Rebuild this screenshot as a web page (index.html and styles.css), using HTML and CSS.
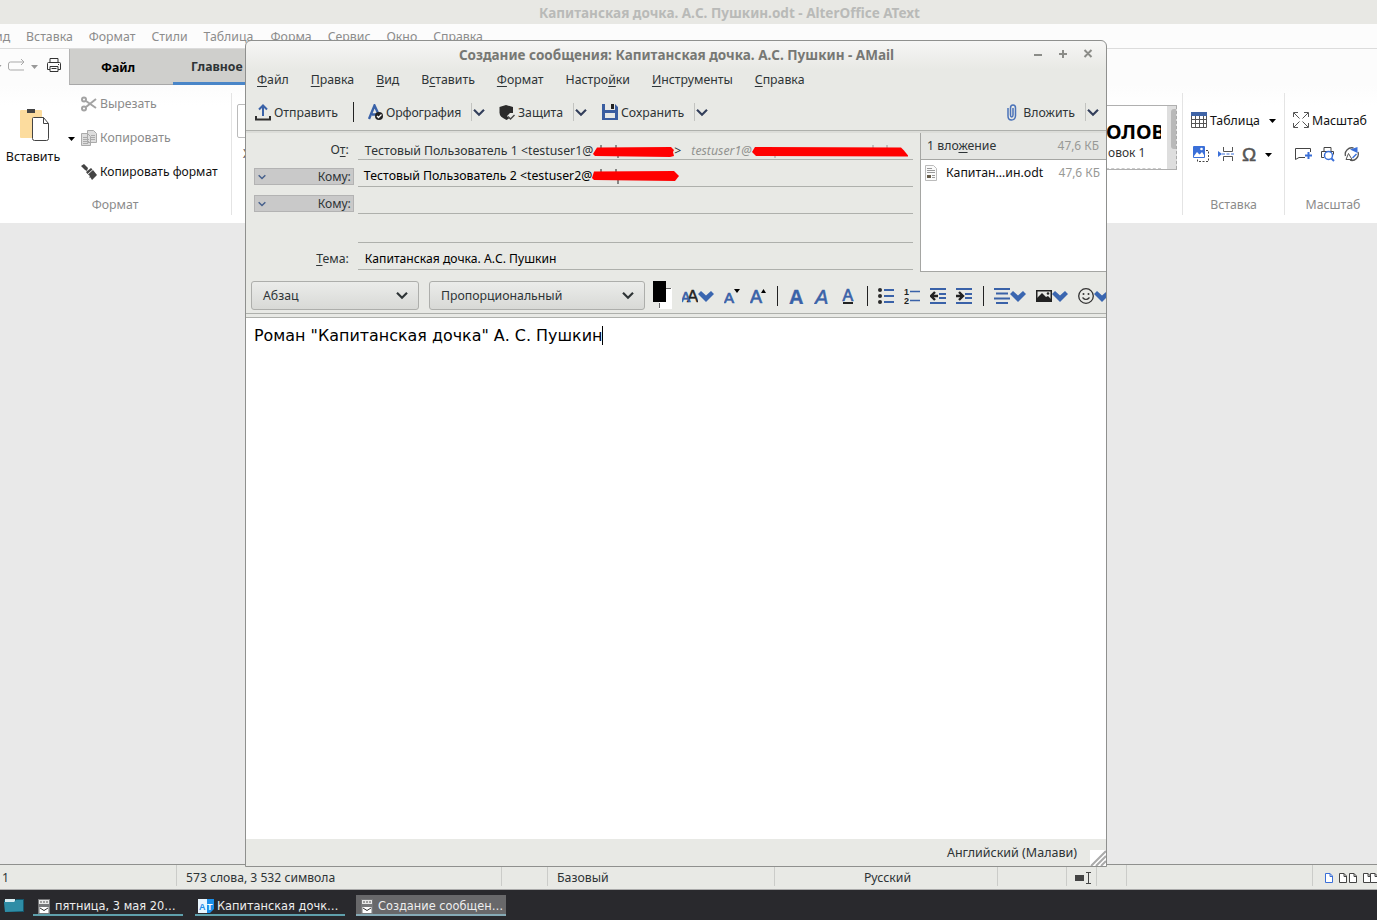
FILE: index.html
```
<!DOCTYPE html>
<html lang="ru">

<head>
  <meta charset="UTF-8">
  <meta name="viewport" content="width=device-width, initial-scale=1.0">
  <title>Создание сообщения</title>
  <link rel="stylesheet" href="styles.css">
</head>

<body>
  <svg class="defs">
    <symbol id="chev" viewBox="0 0 12 9"><path d="M1 1.8 L6 6.8 L11 1.8" fill="none" stroke="currentColor" stroke-width="2.2"/></symbol>
    <symbol id="bigchev" viewBox="0 0 16 16"><path d="M0 6 L3 3 L8 7.500 L13 3 L16 6 L8 14z" fill="#3a66b0"/></symbol>
    <symbol id="mail" viewBox="0 0 12 15"><path d="M0 0h12v15H0z" fill="#77787a"/><path d="M1 1h10v4H1z" fill="#e8e8e8"/><path d="M2 3h8" stroke="#555" stroke-dasharray="2 1"/><path d="M1.500 8h9v6h-9z" fill="#fff"/><path d="M2 9l4 2.500L10 9" fill="none" stroke="#333"/></symbol>
    <symbol id="page" viewBox="0 0 8 10"><path d="M.5.5h4.500l2.500 2.500v6.500h-7zM5 .5v3h2.500" fill="#fff" stroke="currentColor"/></symbol>
  </svg>

  <!-- text editor in the background -->
  <div class="editor">
    <div class="editor__title">Капитанская дочка. А.С. Пушкин.odt - AlterOffice AText</div>
    <div class="editor__menu">
      <span>Вид</span><span>Вставка</span><span>Формат</span><span>Стили</span><span>Таблица</span><span>Форма</span><span>Сервис</span><span>Окно</span><span>Справка</span>
    </div>
    <div class="tabs">
      <div class="quick">
        <svg width="62" height="18" viewBox="0 0 62 18" fill="none">
          <path d="M0 8h1.500L0 10z" fill="#999"/>
          <path d="M24 5H10.500a2 2 0 0 0-2 2v4a2 2 0 0 0 2 2H24M21 2l3 3-3 3" stroke="#a9a9a9"/>
          <path d="M31 8h7l-3.500 4z" fill="#999"/>
          <path d="M50 5V1.500h8V5M50 12.500h-2.500v-6q0-1 1-1h11q1 0 1 1v6H58M50 9.500h8v5h-8zM51.500 11.500h5M58 7.500h1" stroke="#333"/>
        </svg>
      </div>
      <div class="tab tab--file">Файл</div>
      <div class="tab tab--main">Главное</div>
    </div>
    <div class="ribbon">
      <div class="group group--clip">
        <div class="paste">
          <svg width="32" height="34" viewBox="0 0 32 34">
            <rect x="1" y="1" width="22" height="28" rx="1" fill="#fcdc9e"/>
            <rect x="8" y="0" width="8" height="4" fill="#444"/>
            <path d="M14.500 8.500h10l5 6v15q0 2-2 2h-12q-2 0-2-2v-20q0-1 1-1zM24.500 8.500v6h5" fill="#fff" stroke="#444"/>
          </svg>
          <span>Вставить</span>
        </div>
        <svg class="down" width="8" height="4"><path d="M0 0h7l-3.500 4z"/></svg>
        <div class="clip__list">
          <div class="muted"><svg width="16" height="16" viewBox="0 0 16 16" fill="none" stroke="#a3a3a3" stroke-width="2"><circle cx="3" cy="3.500" r="2"/><circle cx="3" cy="12.500" r="2"/><path d="M5 5l10 7M5 11l10-8"/></svg>Вырезать</div>
          <div class="muted"><svg width="16" height="16" viewBox="0 0 16 16" fill="#ddd" stroke="#aaa"><path d="M6.500 .5h6l3 3v9h-9zM.5 3.500h6l3 3v9h-9zM2 7.500h5M2 9.500h6M2 11.500h6M2 13.500h5M10 5.500h4M10 7.500h4M10 9.500h4"/></svg>Копировать</div>
          <div class="painter"><svg width="16" height="16" viewBox="0 0 16 16" fill="#444"><path d="M0 2l3-2 4 4-1 3-2-1zM5 8l5-4 1.500 1.500-5 4.500zM7 10.500l5-4.500 4 5-5 5-1.500-2.500-1.500 0 1-1.500z"/></svg>Копировать формат</div>
        </div>
        <div class="group__name">Формат</div>
      </div>
      <div class="group group--styles">
        <div class="fontbox"></div>
        <span class="strike">Ж</span>
        <div class="gallery">
          <div class="gallery__item"><b>ОЛОВО</b><span>овок 1</span></div>
          <div class="gallery__bar"><i></i></div>
        </div>
      </div>
      <div class="group group--insert">
        <div class="line">
          <svg width="16" height="16" viewBox="0 0 16 16"><path d="M0 0h16v4H0z" fill="#3f64a6"/><path d="M.5 4v11.500h15V4M.5 7.500h15M.5 11.500h15M4.500 4v12M8.500 4v12M12.500 4v12" fill="none" stroke="#555"/></svg>
          <span>Таблица</span>
          <svg class="down" width="8" height="4"><path d="M0 0h7l-3.500 4z"/></svg>
        </div>
        <div class="line line--icons">
          <svg width="18" height="18" viewBox="0 0 18 18"><rect x="1" y="1" width="12" height="12" rx="1" fill="#3a6fd8"/><path d="M2 11l3-4 2.500 2.500L10 7l2 3v2H2z" fill="#fff"/><circle cx="9.500" cy="4" r="1.300" fill="#fff"/><path d="M14 5.500h2.500v11h-11V14" fill="none" stroke="#444" stroke-dasharray="2 1.500"/></svg>
          <svg width="17" height="16" viewBox="0 0 17 16" fill="none"><path d="M5.500 1v4.500h9V1M5.500 15v-4.500h9V15" stroke="#555"/><path d="M4 8h13" stroke="#3a6fd8" stroke-dasharray="3 1.500"/><path d="M0 5l4 3-4 3z" fill="#3a6fd8"/></svg>
          <svg width="17" height="18" viewBox="0 0 17 18"><text x="0" y="16" class="omega">Ω</text></svg>
          <svg class="down" width="8" height="4"><path d="M0 0h7l-3.500 4z"/></svg>
        </div>
        <div class="group__name">Вставка</div>
      </div>
      <div class="group group--zoom">
        <div class="line">
          <svg width="16" height="16" viewBox="0 0 16 16" fill="none" stroke="#555"><path d="M.5 5V.5H5M11 .5h4.500V5M.5 11v4.500H5M11 15.500h4.500V11M1 1l5.500 5.500M15 1L9.500 6.500M1 15l5.500-5.500M15 15L9.500 9.500"/></svg>
          <span>Масштаб</span>
        </div>
        <div class="line line--icons line--zoom">
          <svg width="17" height="16" viewBox="0 0 17 16" fill="none"><path d="M15.500 6V2.500H.5v11L4 11.500h6" stroke="#444"/><path d="M13.500 6v7M10 9.500h7" stroke="#3a6fd8" stroke-width="2"/></svg>
          <svg width="16" height="16" viewBox="0 0 16 16" fill="none" stroke="#444"><path d="M4 5V1.500h7V5M4 11.500H1.500v-6h12v3"/><circle cx="8.500" cy="9.500" r="4" stroke="#3a6fd8" stroke-width="1.500"/><path d="M11.500 12.500l2.500 2.500" stroke="#3a6fd8" stroke-width="2"/></svg>
          <svg width="16" height="16" viewBox="0 0 16 16" fill="none"><path d="M1.500 10a6.500 6.500 0 0 1 8-8M14 6a6.500 6.500 0 0 1-8 8.200" stroke="#555" stroke-width="1.300"/><path d="M6 3.500L13.500 1v6z" fill="#3a6fd8"/><path d="M2 13.500l2.500-6L8 13.500z" stroke="#555"/><path d="M8.500 12l4-4" stroke="#3a6fd8" stroke-width="1.500"/></svg>
        </div>
        <div class="group__name">Масштаб</div>
      </div>
    </div>
    <div class="canvas"></div>
    <div class="status">
      <span class="status__page">1</span>
      <span class="status__words">573 слова, 3 532 символа</span>
      <span class="status__gap"></span>
      <span class="status__style">Базовый</span>
      <span class="status__lang">Русский</span>
      <span class="status__a"></span>
      <span class="status__b"><svg width="17" height="12" viewBox="0 0 17 12"><path d="M0 3h9v6H0z" fill="#444"/><path d="M11 .5h5M11 11.500h5M13.500 1v10" stroke="#444"/></svg></span>
      <span class="status__c"></span>
      <span class="status__d"></span>
      <span class="status__view">
        <svg class="blue" width="8" height="10"><use href="#page"/></svg>
        <svg width="8" height="10"><use href="#page"/></svg><svg width="8" height="10"><use href="#page"/></svg>
        <svg width="8" height="10"><use href="#page"/></svg><svg width="8" height="10"><use href="#page"/></svg>
      </span>
    </div>
  </div>

  <!-- message window -->
  <div class="compose">
    <div class="compose__title">
      <span>Создание сообщения: Капитанская дочка. А.С. Пушкин - AMail</span>
      <svg class="winbtns" width="60" height="12" viewBox="0 0 60 12" stroke="#8b8c88" stroke-width="2"><path d="M1 7h8M26 6h8M30 2v8M51.500 2l7 7M58.500 2l-7 7"/></svg>
    </div>
    <div class="compose__menu">
      <span><u>Ф</u>айл</span><span><u>П</u>равка</span><span><u>В</u>ид</span><span>В<u>с</u>тавить</span><span><u>Ф</u>ормат</span><span>Настро<u>й</u>ки</span><span><u>И</u>нструменты</span><span><u>С</u>правка</span>
    </div>
    <div class="toolbar">
      <div class="btn btn--send">
        <svg width="16" height="17" viewBox="0 0 16 17" fill="none"><path d="M8 12V2M4 5.500L8 1.500l4 4" stroke="#3a62a8" stroke-width="2"/><path d="M1 12v3.500h14V12" stroke="#2e2e2e" stroke-width="2"/></svg>
        <span>Отправить</span>
      </div>
      <div class="sep"></div>
      <div class="btn btn--spell">
        <svg width="16" height="17" viewBox="0 0 16 17" fill="none"><path d="M1 15L6.500 1.500L10 9M4 10.500h4" stroke="#3a62a8" stroke-width="2.400"/><circle cx="11" cy="12" r="4" fill="#222"/><path d="M9 12l1.500 1.500 3-3" stroke="#fff" stroke-width="1.300"/></svg>
        <span>Орфография</span>
        <i></i><svg class="chev" width="12" height="9"><use href="#chev"/></svg>
      </div>
      <div class="btn btn--guard">
        <svg width="16" height="17" viewBox="0 0 16 17"><path d="M7 1l7 2v6h-3l-3 3 2 2.500L7.500 16Q0 13 .5 8V3z" fill="#2b2b2b"/><path d="M9 12.500l2.500 2.500 4-4" fill="none" stroke="#444" stroke-width="1.400"/></svg>
        <span>Защита</span>
        <i></i><svg class="chev" width="12" height="9"><use href="#chev"/></svg>
      </div>
      <div class="btn btn--save">
        <svg width="16" height="17" viewBox="0 0 16 17"><path d="M0 0h3v6h10V0l3 3v13H0z" fill="#3a5da0"/><path d="M3 9h10v5H3z" fill="#e8e9e7"/><path d="M4 0h6v5H4z" fill="#e8e9e7"/><path d="M9 0h3v5H9z" fill="#222"/></svg>
        <span>Сохранить</span>
        <i></i><svg class="chev" width="12" height="9"><use href="#chev"/></svg>
      </div>
      <div class="btn btn--attach">
        <svg width="10" height="17" viewBox="0 0 10 17" fill="none" stroke="#4a72b8" stroke-width="1.500"><path d="M1 4v8q0 4 3.500 4T8.500 12V4Q8.500 1 6 1T3.500 4v7q0 2 1.200 2T6 11V4"/></svg>
        <span>Вложить</span>
        <i></i><svg class="chev" width="12" height="9"><use href="#chev"/></svg>
      </div>
    </div>
    <div class="headers">
      <div class="fields">
        <div class="row row--from">
          <label>О<u>т</u>:</label>
          <div class="field">Тестовый Пользователь 1 &lt;testuser1@<svg class="redact" width="81" height="16" viewBox="0 0 81 16"><path d="M8 2v3M23 2v3M25 11v4" stroke="#333"/><path d="M4 4.500L78 4l3 3-1 2 1 4-4 1L2 13l-2-2z" fill="#f00"/></svg>&gt;<em>testuser1@</em><svg class="redact" width="158" height="16" viewBox="0 0 158 16"><path d="M23 11v4M121 2v3M135 2v3" stroke="#999"/><path d="M3 4L149 4.500l3 3 4 5v1L4 13l-4-4z" fill="#f00"/></svg></div>
        </div>
        <div class="row row--to">
          <label class="pick"><svg width="8" height="6"><use href="#chev"/></svg>Кому:</label>
          <div class="field field--dark">Тестовый Пользователь 2 &lt;testuser2@<svg class="redact" width="88" height="16" viewBox="0 0 88 16"><path d="M9 1v3M24 1v3M26 11v5" stroke="#222"/><path d="M2 3.500L82 3l5 5-4 5L2 12l-2-2z" fill="#f00"/></svg></div>
        </div>
        <div class="row row--to">
          <label class="pick"><svg width="8" height="6"><use href="#chev"/></svg>Кому:</label>
          <div class="field"></div>
        </div>
        <div class="row row--blank"><label></label><div class="field"></div></div>
        <div class="row row--subject">
          <label><u>Т</u>ема:</label>
          <div class="field field--dark">Капитанская дочка. А.С. Пушкин</div>
        </div>
      </div>
      <div class="attachments">
        <div class="attachments__head"><span>1 вло<u>ж</u>ение</span><span class="size">47,6 КБ</span></div>
        <div class="attachments__item">
          <svg width="12" height="16" viewBox="0 0 12 16"><path d="M.5.5h8l3 3v12H.5z" fill="#fafafa" stroke="#bbb"/><path d="M2 3.500h5M2 5.500h8M2 7.500h8M7 10.500h3M7 12.500h3" stroke="#999"/><path d="M2 10h4v3H2z" fill="#665c48"/></svg>
          <span>Капитан…ин.odt</span><span class="size">47,6 КБ</span>
        </div>
      </div>
    </div>
    <div class="format">
      <div class="select select--par">Абзац<svg width="12" height="9"><use href="#chev"/></svg></div>
      <div class="select select--font">Пропорциональный<svg width="12" height="9"><use href="#chev"/></svg></div>
      <svg class="color" width="20" height="28" viewBox="0 0 20 28"><path d="M7 7h13v21H7z" fill="#fff"/><path d="M14 7.500h5M7.500 22v5" stroke="#666"/><path d="M1 0h13v21H1z"/></svg>
      <div class="drop"><svg width="16" height="16"><text x="5" y="14" font-size="17" class="ltr ltr--dark">A</text><text x="-1" y="14" font-size="14" class="ltr ltr--thin">A</text></svg><svg width="16" height="16"><use href="#bigchev"/></svg></div>
      <svg width="16" height="16"><text x="0" y="15" font-size="15" class="ltr ltr--thin">A</text><path d="M10 1h6l-3 4z"/></svg>
      <svg width="16" height="16"><text x="0" y="15" font-size="18" class="ltr ltr--thin">A</text><path d="M11 5h5l-2.500-4z"/></svg>
      <div class="sep"></div>
      <svg width="16" height="16"><text x="1" y="15.500" font-size="20" class="ltr ltr--bold">A</text></svg>
      <svg width="16" height="16"><text x="1" y="15.500" font-size="20" class="ltr ltr--it">A</text></svg>
      <svg width="16" height="16"><text x="2.500" y="12.500" font-size="16" class="ltr ltr--thin">A</text><path d="M3 14h10v2H3z" fill="#222"/></svg>
      <div class="sep"></div>
      <svg width="16" height="16"><g fill="#2b2b2b"><circle cx="2" cy="2" r="2"/><circle cx="2" cy="8" r="2"/><circle cx="2" cy="14" r="2"/></g><path d="M6 2h10M6 8h10M6 14h10" stroke="#3a62a8" stroke-width="2"/></svg>
      <svg width="16" height="16"><text x="0" y="6.500" class="num">1</text><text x="0" y="16" class="num">2</text><path d="M6 3.500h10M6 12.500h10" stroke="#3a62a8" stroke-width="1.500"/></svg>
      <svg width="16" height="16"><path d="M0 1h16M9 6h7M9 10h7M0 15h16" stroke="#3a62a8" stroke-width="2"/><path d="M8 8H2M5 4L1 8l4 4" fill="none" stroke="#222" stroke-width="2.400"/></svg>
      <svg width="16" height="16"><path d="M0 1h16M9 6h7M9 10h7M0 15h16" stroke="#3a62a8" stroke-width="2"/><path d="M0 8h6M3 4l4 4-4 4" fill="none" stroke="#222" stroke-width="2.400"/></svg>
      <div class="sep"></div>
      <div class="drop"><svg width="16" height="16"><path d="M0 1h16M2 5.500h12M0 10.500h16M2 15h12" stroke="#3a62a8" stroke-width="2"/></svg><svg width="16" height="16"><use href="#bigchev"/></svg></div>
      <div class="drop"><svg width="16" height="16"><path d="M.75 2.750h14.500v10.500H.75z" fill="none" stroke="#222" stroke-width="1.500"/><path d="M1 13V10l5-5 4 4 2-1 3 3v2z" fill="#222"/><circle cx="12" cy="5.500" r="1.300" fill="#222"/></svg><svg width="16" height="16"><use href="#bigchev"/></svg></div>
      <div class="drop"><svg width="16" height="16"><circle cx="8" cy="8" r="7.300" fill="none" stroke="#333" stroke-width="1.300"/><circle cx="5.500" cy="6" r="1" fill="#333"/><circle cx="10.500" cy="6" r="1" fill="#333"/><path d="M4.500 9.500q3.500 4 7 0" fill="none" stroke="#333" stroke-width="1.200"/></svg><svg width="16" height="16"><use href="#bigchev"/></svg></div>
    </div>
    <div class="message"><span>Роман "Капитанская дочка" А. С. Пушкин</span></div>
    <div class="compose__status">
      <span>Английский (Малави)</span>
      <svg width="16" height="16"><path d="M0 0h16v16H0z" fill="#fff"/><path d="M1 16L16 1M6 16L16 6M11 16l5-5" stroke="#aaa" stroke-width="2"/></svg>
    </div>
  </div>

  <div class="taskbar">
    <svg class="folder" width="20" height="15" viewBox="0 0 20 15"><path d="M0 2h11l1-1h8v13H1z" fill="#14576c"/><path d="M1 1h10v3H1z" fill="#d8edf2"/><path d="M0 4h10l2-2h7v11l-18 1z" fill="#2f8da6"/></svg>
    <div class="task"><svg width="12" height="15"><use href="#mail"/></svg><span>пятница, 3 мая 20…</span></div>
    <div class="task task--doc"><svg width="16" height="15"><path d="M0 0h10v14H0z" fill="#e8f6ff"/><path d="M9 0h7v10l-4 4H9z" fill="#1b8ee8"/><text x="1" y="11" class="at">A</text><text x="9" y="11" class="at at--w">T</text></svg><span>Капитанская дочк…</span></div>
    <div class="task task--active"><svg width="12" height="15"><use href="#mail"/></svg><span>Создание сообщен…</span></div>
  </div>
</body>

</html>
```
FILE: styles.css
```
* {
  box-sizing: border-box;
}

body {
  margin: 0;
  width: 1377px;
  height: 920px;
  overflow: hidden;
  display: flex;
  flex-direction: column;
  font-family: "Noto Sans", sans-serif;
  font-size: 12.3px;
  line-height: 17px;
  color: #2e3436;
  white-space: nowrap;
}

svg {
  display: block;
  flex: none;
}

u {
  text-underline-offset: 2px;
}

.defs {
  position: absolute;
  width: 0;
  height: 0;
}

/* editor */
.editor {
  height: 890px;
  display: flex;
  flex-direction: column;
  background-color: #e9e9e9;
}

.editor__title {
  height: 24px;
  padding: 5px 0 0 82px;
  text-align: center;
  font-size: 13.52px;
  font-weight: 700;
  color: #b9bab8;
  background-color: #e8e8e4;
}

.editor__menu {
  height: 24px;
  display: flex;
  gap: 16px;
  padding-top: 4px;
  margin-left: -13px;
  color: #8c8c8c;
}

.editor__menu,
.tabs,
.ribbon {
  background-color: #fcfcfc;
}

.editor__menu {
  box-shadow: -20px 0 #fcfcfc;
}

.editor__menu span:nth-child(5) {
  width: 51px;
}

.tabs {
  height: 37px;
  display: flex;
  border-top: 1px solid #dcdcdc;
}

.quick {
  width: 69px;
  padding-top: 8px;
}

.tab {
  height: 36px;
  padding-top: 10px;
  font-size: 12.25px;
  font-weight: 700;
  background-color: #cfcfcc;
  border-bottom: 1px solid #a8a8a8;
}

.tab--file {
  width: 104px;
  padding-left: 31px;
  color: #000;
  border-left: 1px solid #b4b4b4;
}

.tab--main {
  width: 90px;
  padding-left: 18px;
  padding-top: 9px;
  border-bottom: 3px solid #4a86c8;
}

.ribbon {
  height: 138px;
  display: flex;
  background: linear-gradient(#fcfcfc, #fff 20px);
}

.group {
  margin: 8px 0 8px;
  height: 122px;
  color: #111;
  border-right: 1px solid #e4e4e4;
}

.group--clip {
  width: 232px;
  display: grid;
  grid-template-columns: 68px 13px 1fr;
  grid-template-rows: 102px 20px;
}

.paste {
  display: flex;
  flex-direction: column;
  align-items: center;
  gap: 5px;
  padding: 16px 2px 0 0;
  font-size: 12.5px;
}

.paste svg {
  margin-left: 4px;
}

.group--clip > .down {
  margin-top: 44px;
}

.clip__list {
  display: flex;
  flex-direction: column;
  gap: 17px;
  padding-top: 2px;
}

.clip__list div {
  display: flex;
  align-items: center;
  gap: 3px;
}

.clip__list .painter {
  font-size: 12.1px;
}

.muted,
.group__name {
  color: #8b8b8b;
}

.group--clip .group__name {
  grid-column: 1 / 4;
  text-align: center;
  padding: 1px 1px 0 0;
}

.group--styles {
  width: 951px;
  display: grid;
  grid-template-columns: 1fr 640px;
  grid-template-rows: 34px 1fr;
  padding: 11px 5px 0 5px;
}

.fontbox {
  border: 1px solid #bbb;
  border-radius: 2px;
}

.strike {
  grid-row: 2;
  padding: 7px 0 0 6px;
  color: #555;
}

.gallery {
  grid-column: 2;
  grid-row: 1 / 3;
  height: 65px;
  margin-top: 1px;
  display: flex;
  justify-content: flex-end;
  border: 1px solid #b0b0b0;
  border-right: 0;
}

.gallery__item {
  width: 55px;
  overflow: hidden;
  padding-top: 16px;
  margin-right: 6px;
  border-bottom: 1px dashed #ccc;
}

.gallery__item b {
  display: block;
  font-size: 20px;
  line-height: 20px;
  color: #000;
}

.gallery__item span {
  display: block;
  padding: 2px 0 0 2px;
  font-size: 12px;
  color: #333;
}

.gallery__bar {
  width: 10px;
  background-color: #dedede;
  padding: 3px 0 0 4px;
  border-right: 1px dashed #aaa;
}

.gallery__bar i {
  display: block;
  height: 40px;
  border-radius: 3px 0 0 3px;
  background-color: #b9b9b9;
}

.group--insert {
  width: 102px;
}

.group--zoom {
  width: 92px;
  border-right: 0;
}

.line {
  display: flex;
  align-items: center;
  gap: 3px;
  height: 18px;
  padding-left: 8px;
  margin-top: 18px;
}

.line .down {
  margin: 2px 0 0 6px;
}

.line--icons {
  gap: 8px;
  padding-left: 9px;
  margin-top: 16px;
}

.line--icons svg:nth-child(3) {
  margin-left: -1px;
}

.line--icons .down {
  margin-left: -2px;
}

.line--zoom {
  gap: 9px;
  padding-left: 10px;
}

.line--zoom svg:nth-child(2),
.line--zoom svg:nth-child(3) {
  margin-left: -1px;
}

.line + .line + .group__name {
  text-align: center;
  padding-top: 33px;
}

.group--zoom .group__name {
  padding-left: 4px;
}

.omega {
  font: 400 19px "Liberation Sans", sans-serif;
  fill: #555;
  stroke: #555;
  stroke-width: 0.5px;
}

.canvas {
  flex: 1;
}

.status {
  height: 26px;
  display: flex;
  border-top: 1px solid #8f908e;
  border-bottom: 1px solid #aaa;
  background-color: #e8e9e5;
}

.status span {
  flex: none;
  padding: 4px 0 0 9px;
  margin: 0 0 3px;
  border-right: 1px solid #cbccc9;
}

.status .status__page {
  width: 177px;
  padding-left: 2px;
}

.status__words {
  width: 325px;
  font-size: 12.15px;
}

.status__gap {
  width: 46px;
}

.status__style {
  width: 227px;
}

.status .status__lang {
  width: 223px;
  text-align: center;
  padding-left: 3px;
}

.status__a {
  width: 69px;
}

.status .status__b {
  width: 30px;
  padding: 7px 0 0 8px;
}

.status__c {
  width: 30px;
}

.status__d {
  width: 186px;
}

.status .status__view {
  display: flex;
  padding: 8px 0 0 12px;
  gap: 2px;
  border-right: 0;
  color: #444;
}

.status__view .blue {
  color: #3a6fd8;
  margin-right: 4px;
}

.status__view svg:nth-child(3) {
  margin-right: 4px;
}

.status__view svg:last-child {
  margin-left: -3px;
}

/* message window */
.compose {
  position: absolute;
  left: 245px;
  top: 40px;
  width: 862px;
  height: 827px;
  display: flex;
  flex-direction: column;
  overflow: hidden;
  border: 1px solid #8f908e;
  border-radius: 6px 6px 0 0;
  background: linear-gradient(#f6f6f5, #e8e9e5 28px);
}

.compose__title {
  height: 27px;
  display: flex;
  justify-content: center;
  padding-top: 6px;
  font-size: 13.52px;
  font-weight: 700;
  color: #777874;
}

.compose__title span {
  flex: 1;
  text-align: center;
  padding-left: 74px;
}

.winbtns {
  margin: 1px 13px 0 0;
}

.compose__menu {
  height: 26px;
  display: flex;
  gap: 22px;
  padding: 3px 0 0 11px;
}

.toolbar {
  height: 37px;
  display: flex;
  align-items: center;
  padding-left: 9px;
  border-bottom: 1px solid #aeb0ac;
}

.btn {
  display: flex;
  align-items: center;
  gap: 3px;
}

.btn i {
  width: 1px;
  height: 18px;
  margin-left: 7px;
  background-color: #c2c3c0;
}

.btn .chev {
  margin-left: -2px;
  color: #34405c;
}

.sep {
  width: 2px;
  height: 20px;
  border-left: 1px solid #222;
}

.btn--send {
  width: 98px;
}

.btn--spell {
  width: 131px;
}

.btn--spell span {
  margin-left: -1px;
  letter-spacing: -0.15px;
}

.toolbar .sep {
  width: 15px;
}

.btn--guard {
  width: 103px;
}

.btn--guard i,
.btn--save i {
  margin-left: 7px;
}

.btn--attach {
  margin-left: auto;
  padding-right: 7px;
}

.btn--attach span {
  padding-left: 3px;
}

.headers {
  height: 144px;
  display: flex;
  border-top: 2px solid #dcddd9;
}

.fields {
  width: 667px;
  padding-left: 8px;
}

.row {
  height: 27px;
  display: flex;
  align-items: flex-end;
  gap: 4px;
}

.row label {
  width: 100px;
  padding: 0 5px 2px 0;
  text-align: right;
}

.row .pick {
  display: flex;
  align-items: center;
  justify-content: space-between;
  height: 17px;
  padding: 0 2px 0 3px;
  margin-bottom: 2px;
  border: 1px solid #b3b3b3;
  background-color: #c9c9c9;
  font-size: 12.1px;
}

.pick svg {
  color: #46608c;
}

.field {
  height: 100%;
  width: 556px;
  display: flex;
  align-items: flex-end;
  padding: 0 0 0 7px;
  border-bottom: 1px solid #aeb0ac;
}

.field--dark {
  color: #000;
}

.row--to .field {
  padding: 0 0 2px 6px;
}

.row--blank {
  height: 29px;
}

.row--subject label {
  padding-bottom: 3px;
}

.row--subject .field {
  padding-bottom: 2px;
  font-size: 12.15px;
}

.field em {
  margin-left: 10px;
  color: #929390;
}

.attachments {
  margin: 0 0 1px 7px;
  flex: 1;
  height: 139px;
  border: 1px solid #a5a6a3;
  border-width: 0 0 1px 1px;
  background-color: #fff;
}

.attachments__head {
  height: 27px;
  display: flex;
  justify-content: space-between;
  padding: 4px 7px 0 6px;
  border-bottom: 1px solid #a5a6a3;
  background-color: #e5e6e3;
}

.attachments__item {
  display: flex;
  align-items: center;
  padding: 4px 6px 0 4px;
  color: #111;
}

.attachments__item span {
  padding-left: 9px;
}

.attachments .size {
  margin-left: auto;
  font-size: 11.9px;
  color: #989996;
}

.format {
  height: 38px;
  display: flex;
  align-items: center;
  gap: 10px;
  padding: 3px 0 0 5px;
}

.select {
  height: 29px;
  display: flex;
  align-items: center;
  justify-content: space-between;
  flex: none;
  padding: 0 10px 0 11px;
  border: 1px solid #adaeab;
  border-radius: 3px;
  background: linear-gradient(#ebecea, #d8d9d6);
}

.select--par {
  width: 168px;
}

.select--font {
  width: 216px;
}

.color {
  margin: -1px 0 0 -3px;
}

.drop {
  display: flex;
  flex: none;
}

.format .sep {
  flex: none;
  border-left: 0;
  border-right: 1px solid #222;
}

.ltr {
  font-family: "Liberation Sans", sans-serif;
  font-weight: 700;
  fill: #3a62a8;
}

.ltr--dark {
  font-weight: 400;
  fill: #222;
  stroke: #222;
  stroke-width: 0.5px;
}

.ltr--thin {
  font-weight: 400;
  stroke: #3a62a8;
  stroke-width: 0.7px;
}

.ltr--bold {
  stroke: #3a62a8;
  stroke-width: 0.4px;
}

.ltr--it {
  font-weight: 400;
  font-style: italic;
  stroke: #3a62a8;
  stroke-width: 0.5px;
}

.num {
  font: 700 9px "Liberation Sans", sans-serif;
  fill: #222;
}

.message {
  height: 526px;
  padding: 7px 8px;
  border-top: 1px solid #aeb0ac;
  box-shadow: inset 0 3px #e8e9e5, inset 0 4px #aeb0ac;
  background-color: #fff;
  color: #000;
  font-family: "DejaVu Sans", sans-serif;
  font-size: 15.93px;
}

.message span {
  display: inline-block;
  margin-top: 5px;
  line-height: 19px;
  border-right: 1px solid #000;
}

.compose__status {
  flex: 1;
  display: flex;
  align-items: flex-end;
  justify-content: flex-end;
  gap: 13px;
  font-size: 12.5px;
}

.compose__status span {
  padding-bottom: 5px;
}

/* taskbar */
.taskbar {
  height: 30px;
  display: flex;
  align-items: flex-start;
  padding: 5px 0 0 4px;
  background-color: #29292d;
  color: #eee;
  font-family: "DejaVu Sans", sans-serif;
  font-size: 11.4px;
}

.folder {
  margin: 3px 9px 0 0;
}

.task {
  width: 150px;
  height: 21px;
  display: flex;
  align-items: center;
  gap: 5px;
  padding: 3px 0 0 5px;
  margin-right: 12px;
  border-bottom: 2px solid #5fa0ac;
}

.task--doc {
  padding-left: 3px;
  gap: 3px;
}

.task--active {
  background-color: #68686a;
  border-bottom-color: #86aab6;
  margin-left: -1px;
}

.at {
  font: 700 9px "Liberation Sans", sans-serif;
  fill: #1b8ee8;
}

.at--w {
  fill: #fff;
}
```
